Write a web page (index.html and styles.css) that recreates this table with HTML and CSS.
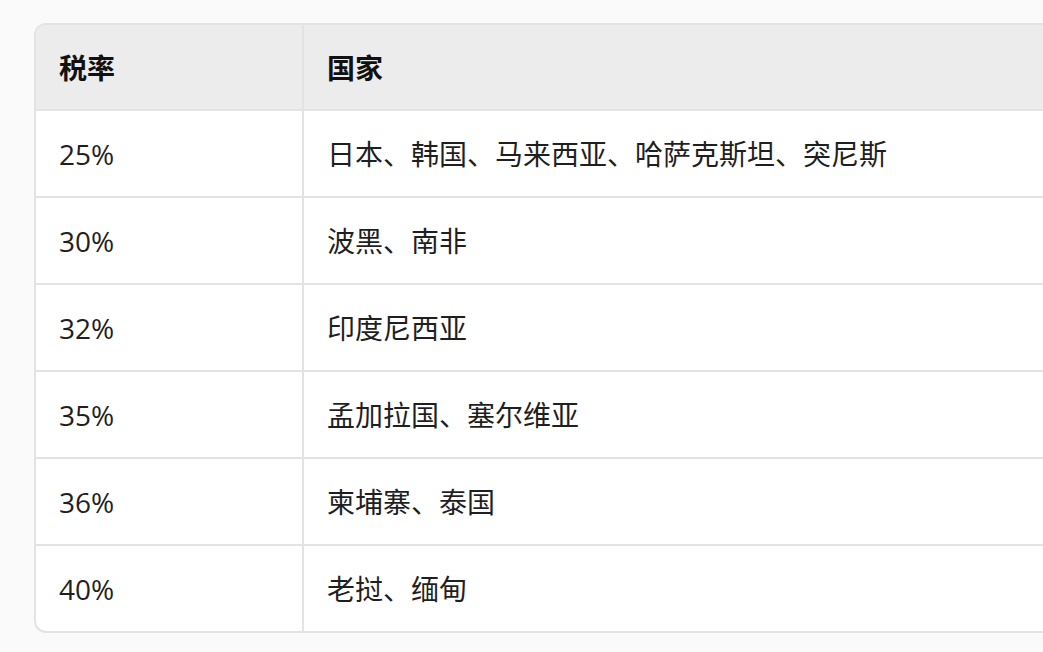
FILE: index.html
```html
<!DOCTYPE html>
<html lang="zh">
<head>
<meta charset="utf-8">
<link rel="stylesheet" href="styles.css">
</head>
<body>
<div class="wrap">
  <table class="tbl">
    <thead>
      <tr><th class="c1">税率</th><th class="c2">国家</th></tr>
    </thead>
    <tbody>
      <tr><td class="c1">25%</td><td class="c2">日本、韩国、马来西亚、哈萨克斯坦、突尼斯</td></tr>
      <tr><td class="c1">30%</td><td class="c2">波黑、南非</td></tr>
      <tr><td class="c1">32%</td><td class="c2">印度尼西亚</td></tr>
      <tr><td class="c1">35%</td><td class="c2">孟加拉国、塞尔维亚</td></tr>
      <tr><td class="c1">36%</td><td class="c2">柬埔寨、泰国</td></tr>
      <tr><td class="c1">40%</td><td class="c2">老挝、缅甸</td></tr>
    </tbody>
  </table>
</div>
</body>
</html>
```
FILE: styles.css
```css
html, body {
  margin: 0;
  padding: 0;
  overflow: hidden;
  background: #fafafa;
}
.wrap {
  padding: 23px 0 0 34px;
  width: 1300px;
}
.tbl {
  border-collapse: separate;
  border-spacing: 0;
  width: 1200px;
  border: 2px solid #e3e3e3;
  border-radius: 12px;
  overflow: hidden;
  background: #fff;
  font-family: "Open Sans", "Noto Sans CJK SC", sans-serif;
  font-size: 28px;
  color: #1f1f1f;
}
.tbl th, .tbl td {
  text-align: left;
  padding: 0 24px;
  height: 87px;
  box-sizing: border-box;
  line-height: 1.4;
  vertical-align: middle;
}
.tbl th {
  background: #ececec;
  font-weight: 700;
  color: #111;
  height: 86px;
  padding-top: 4px;
}
.tbl td {
  padding-top: 3px;
}
.tbl tbody tr:last-child td {
  height: 85px;
}
.tbl thead th, .tbl tbody tr:not(:last-child) td {
  border-bottom: 2px solid #e3e3e3;
}
.tbl .c1 {
  width: 268px;
  padding-left: 23px;
  border-right: 2px solid #e3e3e3;
  box-sizing: border-box;
}
.tbl .c2 {
  padding-left: 23px;
}
```
